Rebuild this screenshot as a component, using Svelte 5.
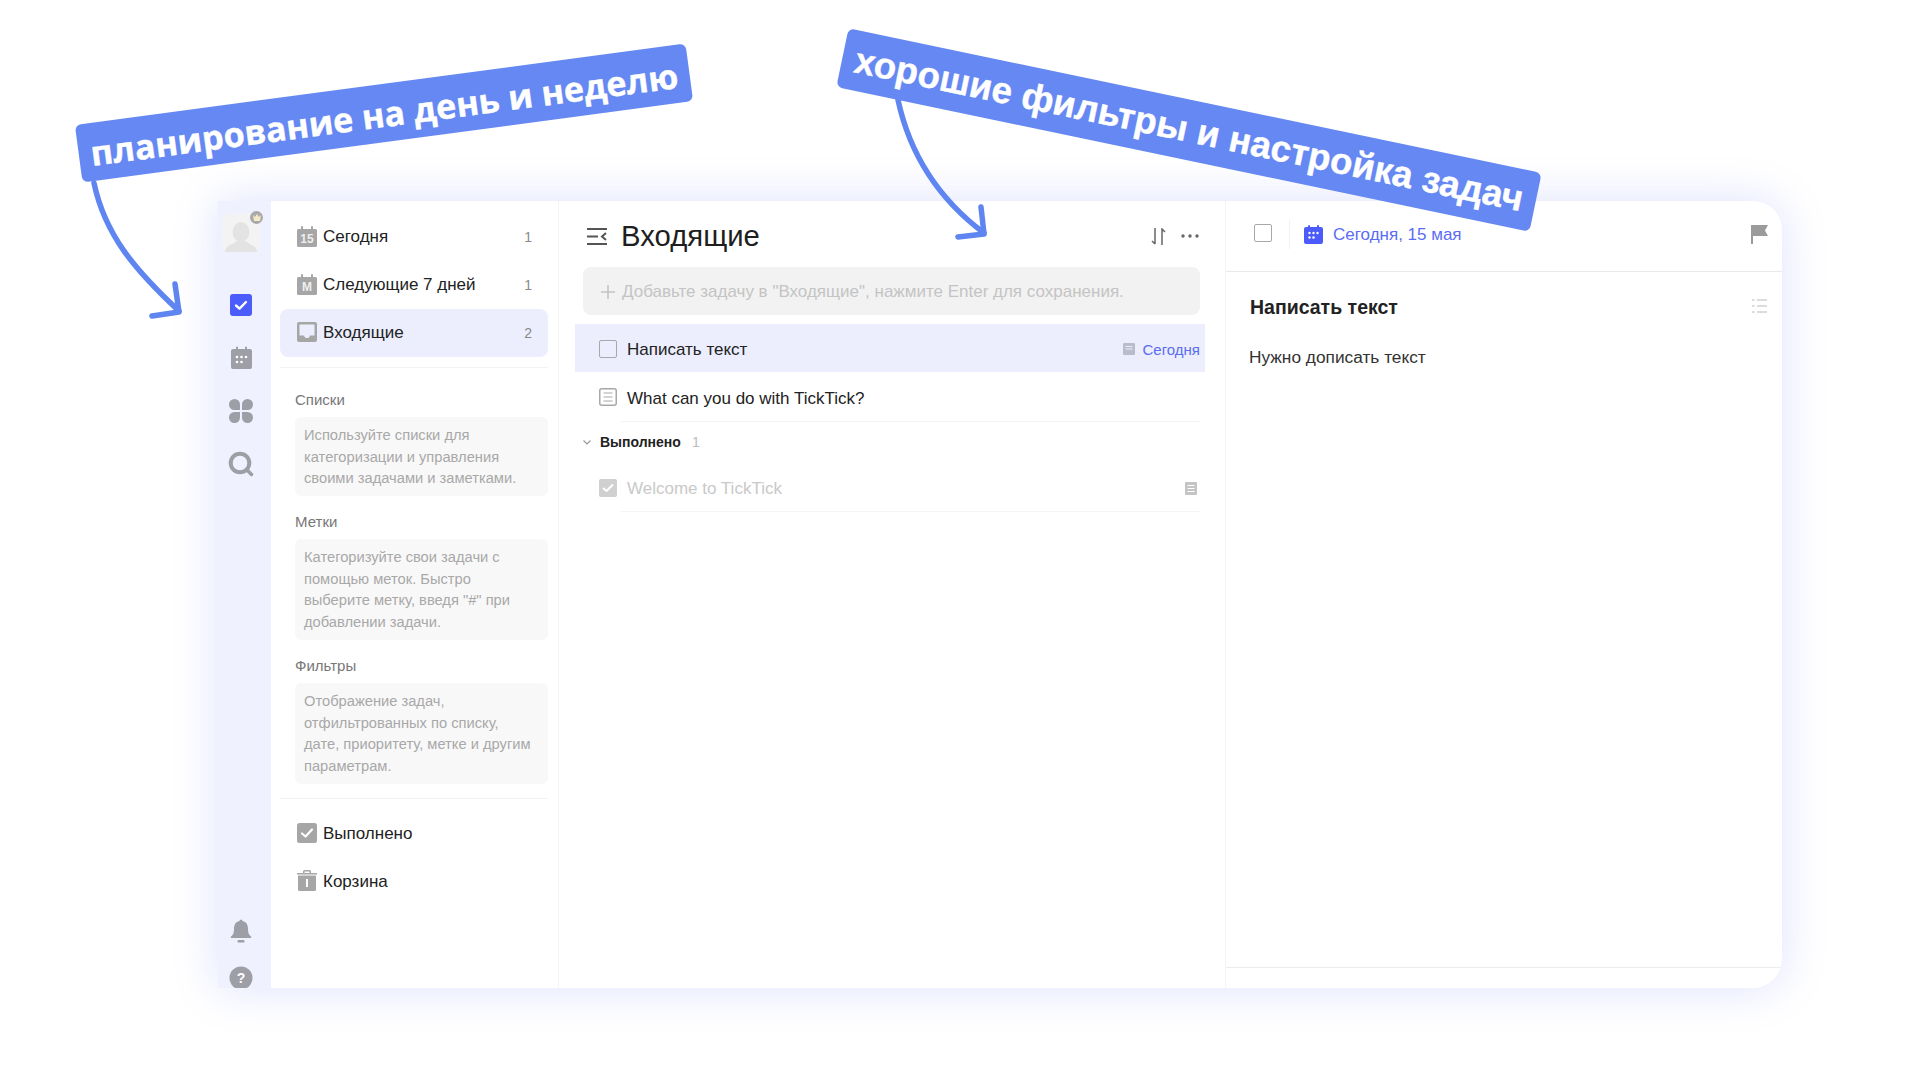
<script>
	const smartLists = [
		{ name: 'Сегодня', count: 1, mark: '15' },
		{ name: 'Следующие 7 дней', count: 1, mark: 'M' }
	];

	const sections = [
		{
			title: 'Списки',
			text: 'Используйте списки для\nкатегоризации и управления\nсвоими задачами и заметками.'
		},
		{
			title: 'Метки',
			text: 'Категоризуйте свои задачи с\nпомощью меток. Быстро\nвыберите метку, введя "#" при\nдобавлении задачи.'
		},
		{
			title: 'Фильтры',
			text: 'Отображение задач,\nотфильтрованных по списку,\nдате, приоритету, метке и другим\nпараметрам.'
		}
	];
</script>

<div class="page">
	<div class="card">
		<nav class="rail">
			<div class="avatar">
				<svg width="38" height="38" viewBox="0 0 38 38" fill="#e3e3e3">
					<ellipse cx="19" cy="18" rx="8.500" ry="10" />
					<path d="M3 38c0-7 9-8 12-11h8c3 3 12 4 12 11z" />
				</svg>
				<span class="crown">
					<svg width="8" height="7" viewBox="0 0 8 7"><path d="M0 1l2 2 2-3 2 3 2-2-1 6H1z" fill="#f5e8c4" /></svg>
				</span>
			</div>

			<svg width="22" height="22" viewBox="0 0 22 22">
				<rect width="22" height="22" rx="3" fill="#4b5cfa" />
				<path d="M6 11.500l3.500 3.200L16 8" fill="none" stroke="#fff" stroke-width="2.400" stroke-linecap="round" stroke-linejoin="round" />
			</svg>
			<svg width="23" height="23" viewBox="0 0 23 23">
				<path d="M3 3h3V1.500a1 1 0 012 0V3h7V1.500a1 1 0 012 0V3h3a2 2 0 012 2v16a2 2 0 01-2 2H3a2 2 0 01-2-2V5a2 2 0 012-2z" fill="#9e9ea7" />
				<g fill="#fff"><circle cx="7" cy="11" r="1.300" /><circle cx="11.500" cy="11" r="1.300" /><circle cx="16" cy="11" r="1.300" /><circle cx="7" cy="16" r="1.300" /><circle cx="11.500" cy="16" r="1.300" /></g>
			</svg>
			<svg width="24" height="24" viewBox="0 0 24 24" fill="#9e9ea7">
				<path d="M11 11H5.500a5.500 5.500 0 115.500-5.500z" />
				<path d="M13 11h5.500a5.500 5.500 0 10-5.500-5.500z" />
				<path d="M11 13H5.500a5.500 5.500 0 105.500 5.500z" />
				<path d="M13 13h5.500a5.500 5.500 0 11-5.500 5.500z" />
			</svg>
			<svg class="rail-search" width="26" height="26" viewBox="0 0 26 26">
				<circle cx="12" cy="12" r="9.300" fill="none" stroke="#9e9ea7" stroke-width="4" />
				<path d="M18.500 18.500l5 5" stroke="#9e9ea7" stroke-width="3.500" stroke-linecap="round" />
			</svg>

			<svg class="rail-bell" width="22" height="24" viewBox="0 0 22 24" fill="#9e9ea7">
				<path d="M9.500 2a1.500 1.500 0 013 0c4 .8 5.500 4 5.500 8 0 4 1 6 3 7.500.6.500.4 1.500-.5 1.500H1.500c-.9 0-1.100-1-.5-1.500C3 16 4 14 4 10c0-4 1.500-7.200 5.500-8z" />
				<rect x="7.500" y="21" width="7" height="2.500" rx="1.200" />
			</svg>
			<svg class="rail-help" width="24" height="24" viewBox="0 0 24 24">
				<circle cx="12" cy="12" r="11.500" fill="#9e9ea7" />
				<text x="12" y="16.500" text-anchor="middle" class="help-mark">?</text>
			</svg>
		</nav>

		<aside class="lists">
			{#each smartLists as item}
				<div class="nav-row">
					<svg width="20" height="21" viewBox="0 0 20 21">
						<path d="M1.500 3H4V1a1 1 0 012 0v2h8V1a1 1 0 012 0v2h2.500A1.500 1.500 0 0120 4.500v15a1.500 1.500 0 01-1.500 1.500h-17A1.500 1.500 0 010 19.500v-15A1.500 1.500 0 011.500 3z" fill="#a6a6a6" />
						<text x="10" y="17" text-anchor="middle" class="cal-mark">{item.mark}</text>
					</svg>
					<span class="nav-name">{item.name}</span>
					<span class="nav-count">{item.count}</span>
				</div>
			{/each}
			<div class="nav-row active">
				<svg width="20" height="20" viewBox="0 0 20 20">
					<rect width="20" height="20" rx="2" fill="#a6a6a6" />
					<path d="M2.500 2.500h15v11H13c-.5 2-1.500 2.500-3 2.500s-2.500-.5-3-2.500H2.500z" fill="#eceefd" />
				</svg>
				<span class="nav-name">Входящие</span>
				<span class="nav-count">2</span>
			</div>

			<hr class="rule" />

			{#each sections as section}
				<div class="section">
					<div class="section-title">{section.title}</div>
					<p class="section-hint">{section.text}</p>
				</div>
			{/each}

			<hr class="rule rule-low" />

			<div class="nav-row">
				<svg width="20" height="20" viewBox="0 0 20 20">
					<rect width="20" height="20" rx="2.500" fill="#a6a6a6" />
					<path d="M5 10.500l3.500 3L15 6.500" fill="none" stroke="#fff" stroke-width="2.200" stroke-linecap="round" stroke-linejoin="round" />
				</svg>
				<span class="nav-name">Выполнено</span>
			</div>
			<div class="nav-row">
				<svg width="20" height="21" viewBox="0 0 20 21">
					<path d="M0 3h6V1.500A1.500 1.500 0 017.500 0h5A1.500 1.500 0 0114 1.500V3h6v1.500H0zM7.500 1.500V3h5V1.500z" fill="#a6a6a6" />
					<path d="M1 5.500h18v14a1.500 1.500 0 01-1.500 1.500h-15A1.500 1.500 0 011 19.500z" fill="#a6a6a6" />
					<rect x="9" y="9" width="2" height="8" fill="#fff" />
				</svg>
				<span class="nav-name">Корзина</span>
			</div>
		</aside>

		<main class="tasks">
			<header class="tasks-head">
				<svg width="20" height="17" viewBox="0 0 20 17" fill="none" stroke="#555" stroke-width="2">
					<path d="M0 1h20M0 8.500h11M0 16h20M19 5l-4 3.500 4 3.500" />
				</svg>
				<h1>Входящие</h1>
				<svg class="sort" width="15" height="17" viewBox="0 0 15 17" fill="none" stroke="#666" stroke-width="1.500">
					<path d="M4 0v16M1 13l3 3M11 17V1l3 3" />
				</svg>
				<svg width="18" height="4" viewBox="0 0 18 4" fill="#666">
					<circle cx="2" cy="2" r="1.700" /><circle cx="9" cy="2" r="1.700" /><circle cx="16" cy="2" r="1.700" />
				</svg>
			</header>

			<div class="add-box">
				<svg width="14" height="14" viewBox="0 0 14 14" stroke="#c4c4c4" stroke-width="1.600"><path d="M7 0v14M0 7h14" /></svg>
				<span>Добавьте задачу в "Входящие", нажмите Enter для сохранения.</span>
			</div>

			<div class="task selected">
				<span class="box"></span>
				<span class="task-name">Написать текст</span>
				<svg class="note" width="12" height="12" viewBox="0 0 12 12">
					<rect width="12" height="12" rx="1" fill="#b9bcc9" />
					<path d="M2.500 3.500h7M2.500 6h7" stroke="#eceefd" stroke-width="1.200" />
				</svg>
				<span class="task-date">Сегодня</span>
			</div>
			<div class="task">
				<svg width="18" height="18" viewBox="0 0 18 18" fill="none">
					<rect x=".75" y=".75" width="16.500" height="16.500" rx="2" stroke="#a8a8a8" stroke-width="1.500" />
					<path d="M4.500 5h9M4.500 9h9M4.500 13h9" stroke="#a8a8a8" stroke-width="1.200" />
				</svg>
				<div class="task-line"><span>What can you do with TickTick?</span></div>
			</div>

			<div class="done-head">
				<svg width="8" height="5" viewBox="0 0 8 5" fill="none" stroke="#999" stroke-width="1.200"><path d="M.5.500L4 4 7.500.500" /></svg>
				<b>Выполнено</b>
				<span>1</span>
			</div>

			<div class="task done">
				<svg width="18" height="18" viewBox="0 0 18 18">
					<rect width="18" height="18" rx="2" fill="#d0d0d0" />
					<path d="M4.500 9.500l3 2.500 6-6" fill="none" stroke="#fff" stroke-width="2" stroke-linecap="round" stroke-linejoin="round" />
				</svg>
				<div class="task-line">
					<span>Welcome to TickTick</span>
					<svg width="12" height="13" viewBox="0 0 12 13">
						<rect width="12" height="13" rx="1" fill="#c4c4c4" />
						<path d="M2.500 3.500h7M2.500 6.500h7M2.500 9.500h7" stroke="#fff" stroke-width="1.100" />
					</svg>
				</div>
			</div>
		</main>

		<section class="detail">
			<header class="detail-head">
				<span class="box detail-box"></span>
				<span class="detail-sep"></span>
				<svg width="19" height="19" viewBox="0 0 19 19">
					<path d="M2 2h2V1a1 1 0 012 0v1h7V1a1 1 0 012 0v1h2a2 2 0 012 2v13a2 2 0 01-2 2H2a2 2 0 01-2-2V4a2 2 0 012-2z" fill="#4b5cfa" />
					<g fill="#fff"><circle cx="5.500" cy="8" r="1.200" /><circle cx="9.500" cy="8" r="1.200" /><circle cx="13.500" cy="8" r="1.200" /><circle cx="5.500" cy="12.500" r="1.200" /><circle cx="9.500" cy="12.500" r="1.200" /></g>
				</svg>
				<span class="detail-date">Сегодня, 15 мая</span>
				<svg class="flag" width="17" height="19" viewBox="0 0 17 19" fill="#9b9b9b">
					<path d="M0 0h17l-3 5.500 3 5.500H2v8H0z" />
				</svg>
			</header>
			<div class="detail-body">
				<div class="detail-title">
					<h2>Написать текст</h2>
					<svg width="15" height="14" viewBox="0 0 15 14" stroke="#dcdcdc" stroke-width="2">
						<path d="M0 1h2.500M5 1h10M0 7h2.500M5 7h10M0 13h2.500M5 13h10" />
					</svg>
				</div>
				<p>Нужно дописать текст</p>
			</div>
			<div class="detail-foot"></div>
		</section>
	</div>

	<!-- annotations drawn over the app window -->
	<svg class="arrows" width="1920" height="1080" viewBox="0 0 1920 1080" fill="none" stroke="#5f85f0" stroke-width="5.500" stroke-linecap="round" stroke-linejoin="round">
		<path d="M94 183C105 235 135 270 179 311" />
		<path d="M175 284l4 28-27 4" />
		<path d="M898 100C910 155 940 200 984 233" />
		<path d="M981 207l3 27-26 3" />
	</svg>
	<div class="banner banner-plan">планирование на день и неделю</div>
	<div class="banner banner-filter">хорошие фильтры и настройка задач</div>
</div>

<style>
	:global(body) {
		background: #fff;
	}

	.page {
		position: relative;
		width: 1920px;
		height: 1080px;
		padding: 201px 0 0 218px;
		box-sizing: border-box;
		overflow: hidden;
		font-family: 'Liberation Sans', Arial, sans-serif;
		color: #222;
	}

	.card {
		display: flex;
		width: 1564px;
		height: 787px;
		background: #fff;
		border-radius: 0 29px 29px 0;
		box-shadow: 0 0 45px rgba(100, 120, 240, 0.22);
		overflow: hidden;
	}

	.rail {
		flex: 0 0 53px;
		box-sizing: border-box;
		padding: 13px 7px 0 0;
		background: #eff1fe;
		display: flex;
		flex-direction: column;
		align-items: center;
		gap: 30px;
	}

	.rail > * {
		flex-shrink: 0;
	}

	.avatar {
		position: relative;
		width: 38px;
		height: 38px;
		margin-bottom: 12px;
		border-radius: 8px;
		background: #f3f3f4;
	}

	.avatar > svg {
		display: block;
	}

	.crown {
		position: absolute;
		top: -3px;
		right: -3px;
		width: 13px;
		height: 13px;
		border-radius: 50%;
		background: #a9a9ac;
		display: flex;
		align-items: center;
		justify-content: center;
	}

	.rail-search {
		margin-top: -2px;
	}

	.rail-bell {
		margin-top: 412px;
	}

	.rail-help {
		margin-top: -7px;
	}

	.help-mark {
		font: bold 14px 'Liberation Sans', sans-serif;
		fill: #fff;
	}

	.lists {
		flex: 0 0 288px;
		box-sizing: border-box;
		padding: 12px 10px 0 9px;
		border-right: 1px solid #f4f4f4;
	}

	.nav-row {
		display: flex;
		align-items: center;
		height: 48px;
		padding: 0 16px 0 17px;
		border-radius: 8px;
		font-size: 17px;
	}

	.nav-row svg {
		margin-bottom: 2px;
	}

	.nav-row.active {
		background: #eceefd;
	}

	.nav-name {
		margin-left: 6px;
		flex: 1;
	}

	.nav-count {
		font-size: 14px;
		color: #888;
	}

	.cal-mark {
		font: bold 12px 'Liberation Sans', sans-serif;
		fill: #eee;
	}

	.rule {
		margin: 10px 0 0;
		border: 0;
		border-top: 1px solid #f3f3f3;
	}

	.rule-low {
		margin-top: 14px;
		margin-bottom: 11px;
	}

	.section {
		margin-left: 15px;
	}

	.section-title {
		height: 20px;
		margin-top: 22px;
		font-size: 15px;
		line-height: 20px;
		color: #777;
	}

	.section + .section .section-title {
		margin-top: 16.500px;
	}

	.section-hint {
		margin: 7px 0 0;
		padding: 8px 9px 6px;
		border-radius: 6px;
		background: #f8f8f8;
		font-size: 14.700px;
		line-height: 21.600px;
		color: #a8a8a8;
		white-space: pre-line;
	}

	.tasks {
		flex: 0 0 667px;
		box-sizing: border-box;
		padding: 0 25px 0 24px;
		border-right: 1px solid #f4f4f4;
	}

	.tasks-head {
		display: flex;
		align-items: center;
		box-sizing: border-box;
		height: 66px;
		padding: 4px 1px 0 4px;
	}

	.tasks-head h1 {
		flex: 1;
		margin: 0 0 0 14px;
		font-size: 29.300px;
		font-weight: 400;
		color: #1e1e1e;
	}

	.sort {
		margin-right: 15px;
	}

	.add-box {
		display: flex;
		align-items: center;
		gap: 7px;
		box-sizing: border-box;
		height: 48px;
		padding: 2px 18px 0;
		border-radius: 8px;
		background: #f2f2f2;
		font-size: 17px;
		color: #c4c4c4;
	}

	.task {
		display: flex;
		align-items: center;
		box-sizing: border-box;
		height: 48px;
		margin: 0 -5px 0 -8px;
		padding: 2px 5px 0 24px;
		font-size: 17px;
	}

	.selected {
		margin-top: 9px;
		background: #eceefd;
	}

	.box {
		flex: none;
		box-sizing: border-box;
		width: 18px;
		height: 18px;
		border: 1.500px solid #a8a8a8;
		border-radius: 2px;
	}

	.task-name {
		margin-left: 10px;
		padding-top: 2px;
	}

	.task-line {
		flex: 1;
		align-self: stretch;
		display: flex;
		align-items: center;
		justify-content: space-between;
		margin: 0 0 -2px 4px;
		padding: 2px 3px 0 6px;
		border-bottom: 1px solid #f4f4f4;
	}

	.note {
		margin-left: auto;
	}

	.task-date {
		margin-left: 8px;
		font-size: 15px;
		color: #5a6cf0;
	}

	.done-head {
		display: flex;
		align-items: center;
		height: 44px;
		font-size: 14px;
	}

	.done-head b {
		margin-left: 9px;
	}

	.done-head span {
		margin-left: 11px;
		color: #bbb;
	}

	.done {
		padding-top: 0;
		color: #c9c9c9;
	}

	.done .task-line {
		margin-bottom: 0;
	}

	.detail {
		flex: 1;
		display: flex;
		flex-direction: column;
		min-width: 0;
	}

	.detail-head {
		display: flex;
		align-items: center;
		height: 71px;
		padding: 0 14px 3px 28px;
		border-bottom: 1px solid #e9e9e9;
		box-sizing: border-box;
	}

	.detail-box {
		margin-top: -3px;
	}

	.detail-sep {
		width: 1px;
		height: 29px;
		margin: 0 14px 0 17px;
		background: #f2f2f2;
	}

	.detail-date {
		flex: 1;
		margin-left: 10px;
		font-size: 17px;
		color: #5b6cf5;
	}

	.detail-body {
		flex: 1;
		padding: 0 15px 0 23px;
	}

	.detail-title {
		display: flex;
		align-items: center;
		justify-content: space-between;
		height: 70px;
	}

	.detail-title h2 {
		margin: 0 0 0 1px;
		font-size: 19.500px;
	}

	.detail-title svg {
		margin-bottom: 2px;
	}

	.detail-body p {
		margin: 5px 0 0;
		font-size: 17.300px;
		color: #333;
	}

	.detail-foot {
		height: 20px;
		border-top: 1px solid #ededed;
	}

	.arrows {
		position: absolute;
		top: 0;
		left: 0;
	}

	.banner {
		position: absolute;
		display: flex;
		align-items: center;
		justify-content: center;
		background: #6688f2;
		border-radius: 6px;
		color: #fff;
		font-weight: 700;
		white-space: nowrap;
		-webkit-text-stroke: 0.4px #fff;
	}

	.banner-plan {
		left: 76px;
		top: 84px;
		width: 616px;
		height: 58px;
		transform: rotate(-7.600deg);
		font-family: 'Open Sans', sans-serif;
		font-size: 34.200px;
	}

	.banner-filter {
		left: 835px;
		top: 100px;
		width: 708px;
		height: 60px;
		transform: rotate(11.800deg);
		font-family: 'Liberation Sans', Arial, sans-serif;
		font-size: 36.700px;
	}
</style>
